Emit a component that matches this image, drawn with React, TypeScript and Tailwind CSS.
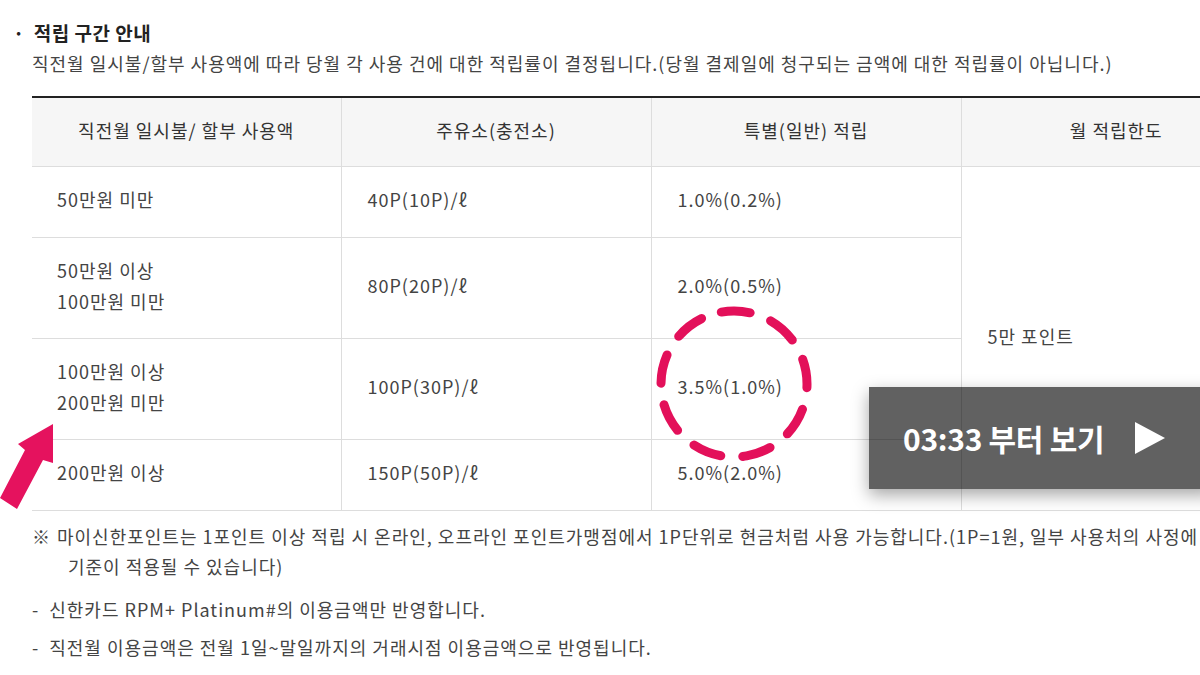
import React from "react";

const font = {
  fontFamily: '"Noto Sans CJK KR", "Noto Sans", sans-serif',
};

export default function App() {
  return (
    <div
      className="relative w-[1200px] h-[675px] overflow-hidden bg-white text-[#444]"
      style={font}
    >
      <div className="pt-[18px] pl-[32px]">
        <div className="flex items-center -ml-[19px] gap-[9px] leading-[30px] text-[19px] font-bold text-[#222] tracking-[0.5px]">
          <span>·</span>
          <span>적립 구간 안내</span>
        </div>
        <div className="text-[18px] leading-[30px] whitespace-nowrap text-[#444] tracking-[1px]">
          직전월 일시불/할부 사용액에 따라 당월 각 사용 건에 대한 적립률이 결정됩니다.(당월 결제일에 청구되는 금액에 대한 적립률이 아닙니다.)
        </div>
        <table className="mt-[18px] w-[1239px] table-fixed border-collapse border-t-2 border-[#222] text-[18px] tracking-[1px] text-[#444]">
          <colgroup>
            <col className="w-[309px]" />
            <col className="w-[310px]" />
            <col className="w-[310px]" />
            <col className="w-[310px]" />
          </colgroup>
          <thead>
            <tr className="h-[69px] bg-[#f6f6f6]">
              <th className="font-normal text-[#333] border-b border-r border-[#dddddd] text-center pb-[2px]">
                직전월 일시불/ 할부 사용액
              </th>
              <th className="font-normal text-[#333] border-b border-r border-[#dddddd] text-center pb-[2px]">
                주유소(충전소)
              </th>
              <th className="font-normal text-[#333] border-b border-r border-[#dddddd] text-center pb-[2px]">
                특별(일반) 적립
              </th>
              <th className="font-normal text-[#333] border-b border-[#dddddd] text-center pb-[2px]">
                월 적립한도
              </th>
            </tr>
          </thead>
          <tbody className="leading-[31px]">
            <tr className="h-[71px]">
              <td className="pl-[25px] pb-[4px] border-b border-r border-[#dddddd]">50만원 미만</td>
              <td className="pl-[26px] pb-[4px] border-b border-r border-[#dddddd]">40P(10P)/ℓ</td>
              <td className="pl-[26px] pb-[4px] border-b border-r border-[#dddddd]">1.0%(0.2%)</td>
              <td rowSpan={4} className="pl-[26px] pb-[4px] border-b border-[#dddddd]">5만 포인트</td>
            </tr>
            <tr className="h-[101px]">
              <td className="pl-[25px] pb-[4px] border-b border-r border-[#dddddd]">
                50만원 이상
                <br />
                100만원 미만
              </td>
              <td className="pl-[26px] pb-[4px] border-b border-r border-[#dddddd]">80P(20P)/ℓ</td>
              <td className="pl-[26px] pb-[4px] border-b border-r border-[#dddddd]">2.0%(0.5%)</td>
            </tr>
            <tr className="h-[101px]">
              <td className="pl-[25px] pb-[4px] border-b border-r border-[#dddddd]">
                100만원 이상
                <br />
                200만원 미만
              </td>
              <td className="pl-[26px] pb-[4px] border-b border-r border-[#dddddd]">100P(30P)/ℓ</td>
              <td className="pl-[26px] pb-[4px] border-b border-r border-[#dddddd]">3.5%(1.0%)</td>
            </tr>
            <tr className="h-[71px]">
              <td className="pl-[25px] pb-[4px] border-b border-r border-[#dddddd]">200만원 이상</td>
              <td className="pl-[26px] pb-[4px] border-b border-r border-[#dddddd]">150P(50P)/ℓ</td>
              <td className="pl-[26px] pb-[4px] border-b border-r border-[#dddddd]">5.0%(2.0%)</td>
            </tr>
          </tbody>
        </table>
        <div className="mt-[10px] text-[18px] leading-[30px] tracking-[1px] text-[#444] whitespace-nowrap">
          <div className="flex gap-[6px]">
            <span>※</span>
            <span>
              마이신한포인트는 1포인트 이상 적립 시 온라인, 오프라인 포인트가맹점에서 1P단위로 현금처럼 사용 가능합니다.(1P=1원, 일부 사용처의 사정에 따라 다른
            </span>
          </div>
          <div className="pl-[36px]">기준이 적용될 수 있습니다)</div>
          <div className="mt-[13px] flex gap-[10px]">
            <span>-</span>
            <span>신한카드 RPM+ Platinum#의 이용금액만 반영합니다.</span>
          </div>
          <div className="mt-[8px] flex gap-[10px]">
            <span>-</span>
            <span>직전월 이용금액은 전월 1일~말일까지의 거래시점 이용금액으로 반영됩니다.</span>
          </div>
        </div>
      </div>

      {/* dashed circle annotation */}
      <svg
        className="absolute left-[650px] top-[300px]"
        width="170"
        height="170"
        viewBox="0 0 170 170"
      >
        <circle
          cx="84"
          cy="84"
          r="73"
          fill="none"
          stroke="#e3105a"
          strokeWidth="9"
          strokeLinecap="round"
          strokeDasharray="29 22"
          transform="rotate(-100 84 84)"
        />
      </svg>

      {/* arrow annotation */}
      <svg className="absolute left-0 top-[420px]" width="60" height="95" viewBox="0 0 60 95">
        <polygon
          points="53,4 53,43 43,40 17,89 0,78 25,30 18,24"
          fill="#e5125e"
        />
      </svg>

      {/* resume button overlay */}
      <div className="absolute left-[869px] top-[387px] w-[345px] h-[102px] bg-[rgba(0,0,0,0.62)] shadow-[0_6px_16px_rgba(0,0,0,0.35)] flex items-center pl-[34px]">
        <span className="text-white font-bold text-[30px] leading-none tracking-[-0.3px]">03:33 부터 보기</span>
        <svg className="ml-[30px]" width="32" height="34" viewBox="0 0 32 34">
          <polygon points="1,1 31,17 1,33" fill="#ffffff" />
        </svg>
      </div>
    </div>
  );
}
